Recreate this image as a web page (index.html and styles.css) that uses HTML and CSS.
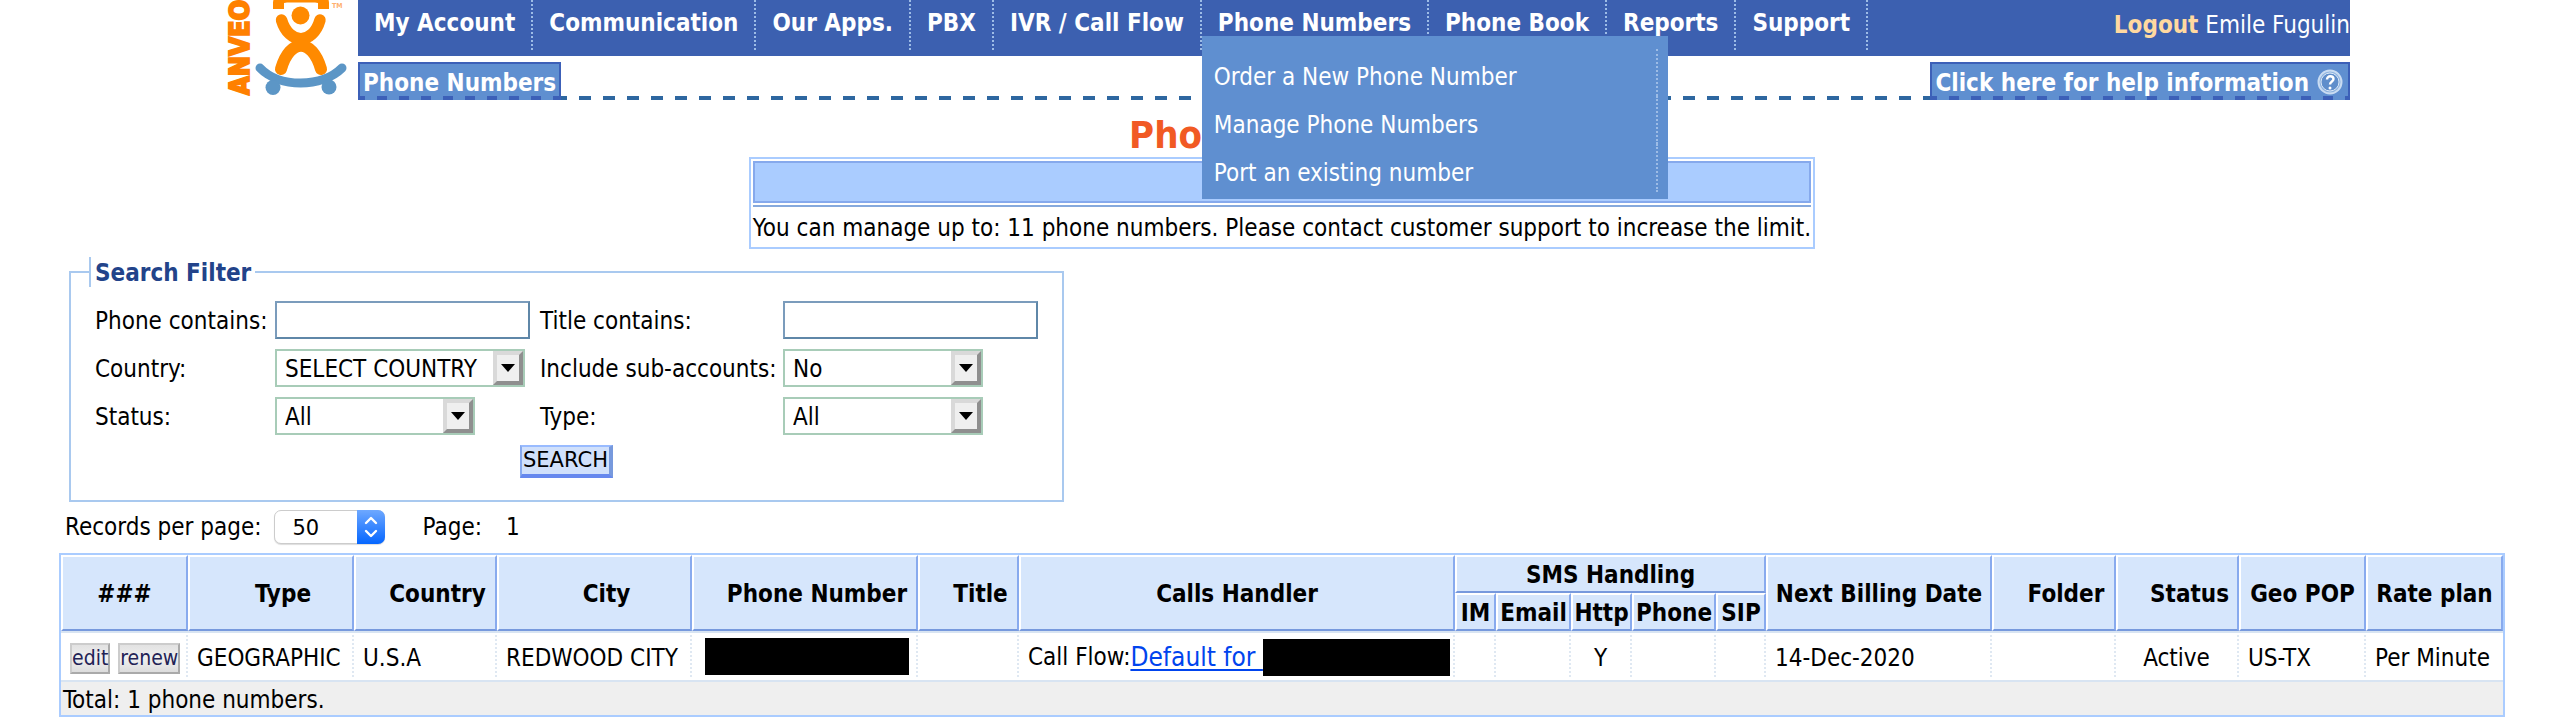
FILE: index.html
```html
<!DOCTYPE html>
<html lang="en">
<head>
<meta charset="utf-8">
<title>Phone Numbers</title>
<link rel="stylesheet" href="styles.css">
</head>
<body>
<header class="header">
  <a class="logo" href="#" aria-label="Anveo">
    <svg width="122" height="96" viewBox="0 0 122 96">
      <text class="logo-name" transform="translate(22 95) rotate(-90)">ANVEO</text>
      <g fill="none" stroke="#ff8a00" stroke-linecap="round">
        <path d="M51.500 9V3Q52 -3 60 -3H88Q96 -3 96.500 3V9" stroke-width="11" stroke-linecap="butt"/>
        <path d="M54.500 20C62 45 86 45 93 20" stroke-width="11.500"/>
        <path d="M54 69C63 38 85 38 94 69" stroke-width="12"/>
      </g>
      <circle cx="73.500" cy="15.500" r="9" fill="#ff8a00"/>
      <path d="M33 68C52 88 95 88 115 68" fill="none" stroke="#5c96c6" stroke-width="9" stroke-linecap="round"/>
      <circle cx="46" cy="87.500" r="7.500" fill="#5c96c6"/>
      <circle cx="102" cy="87" r="7.500" fill="#5c96c6"/>
      <text class="logo-tm" x="105" y="8">TM</text>
    </svg>
  </a>
  <div class="bars">
    <nav class="nav">
      <ul class="menu">
        <li><a href="#">My Account</a></li>
        <li><a href="#">Communication</a></li>
        <li><a href="#">Our Apps.</a></li>
        <li><a href="#">PBX</a></li>
        <li><a href="#">IVR / Call Flow</a></li>
        <li><a href="#">Phone Numbers</a>
          <ul class="submenu">
            <li><a href="#">Order a New Phone Number</a></li>
            <li><a href="#">Manage Phone Numbers</a></li>
            <li><a href="#">Port an existing number</a></li>
          </ul>
        </li>
        <li><a href="#">Phone Book</a></li>
        <li><a href="#">Reports</a></li>
        <li><a href="#">Support</a></li>
      </ul>
      <div class="user"><a href="#">Logout</a> Emile Fugulin</div>
    </nav>
    <div class="subbar">
      <a class="tab" href="#">Phone Numbers</a>
      <span class="dashes"></span>
      <a class="tab tab-help" href="#">Click here for help information
        <svg width="26" height="28" viewBox="0 0 26 28">
          <circle cx="13" cy="13" r="11.500" fill="#8fb3de" stroke="#c9dcf2" stroke-width="2"/>
          <circle cx="13" cy="13" r="9" fill="#5f8ecb" stroke="#dbe8f7" stroke-width="1"/>
          <path d="M10 10.500C10 6 16.500 6.500 16.500 10C16.500 12.500 13 12.500 13 15.500" fill="none" stroke="#fff" stroke-width="2.400"/>
          <circle cx="13" cy="19" r="1.500" fill="#fff"/>
        </svg>
      </a>
    </div>
  </div>
</header>

<main class="page">
  <h1>Phone Numbers</h1>
  <section class="notice">
    <div class="notice-head"></div>
    <p>You can manage up to: 11 phone numbers. Please contact customer support to increase the limit.</p>
  </section>

  <form class="search">
    <fieldset>
      <legend>Search Filter</legend>
      <div class="fields">
        <label for="phone">Phone contains:</label>
        <input class="text" id="phone" type="text">
        <label for="title">Title contains:</label>
        <input class="text" id="title" type="text">
        <label for="country">Country:</label>
        <div class="pick pick-wide">
          <select id="country"><option>SELECT COUNTRY</option></select>
          <span class="arrow"><svg width="14" height="8" viewBox="0 0 14 8"><path d="M0 0H14L7 8Z"/></svg></span>
        </div>
        <label for="sub">Include sub-accounts:</label>
        <div class="pick">
          <select id="sub"><option>No</option></select>
          <span class="arrow"><svg width="14" height="8" viewBox="0 0 14 8"><path d="M0 0H14L7 8Z"/></svg></span>
        </div>
        <label for="status">Status:</label>
        <div class="pick">
          <select id="status"><option>All</option></select>
          <span class="arrow"><svg width="14" height="8" viewBox="0 0 14 8"><path d="M0 0H14L7 8Z"/></svg></span>
        </div>
        <label for="type">Type:</label>
        <div class="pick">
          <select id="type"><option>All</option></select>
          <span class="arrow"><svg width="14" height="8" viewBox="0 0 14 8"><path d="M0 0H14L7 8Z"/></svg></span>
        </div>
      </div>
      <button class="search-button" type="button">SEARCH</button>
    </fieldset>
  </form>

  <div class="pager">
    <label for="records">Records per page:</label>
    <div class="stepper">
      <select id="records"><option>50</option></select>
      <span class="stepper-arrows"><svg width="14" height="22" viewBox="0 0 14 22" fill="none" stroke="#fff" stroke-width="2.400" stroke-linecap="round" stroke-linejoin="round"><path d="M2 7L7 2L12 7M2 15L7 20L12 15"/></svg></span>
    </div>
    <span class="pager-label">Page:</span>
    <span>1</span>
  </div>

  <table class="numbers">
    <colgroup>
      <col class="c-actions"><col class="c-type"><col class="c-country"><col class="c-city"><col class="c-phone"><col class="c-title"><col class="c-calls"><col class="c-im"><col class="c-email"><col class="c-http"><col class="c-smsphone"><col class="c-sip"><col class="c-billing"><col class="c-folder"><col class="c-status"><col class="c-pop"><col class="c-rate">
    </colgroup>
    <thead>
      <tr>
        <th rowspan="2">###</th>
        <th rowspan="2" class="sortable">Type</th>
        <th rowspan="2" class="sortable">Country</th>
        <th rowspan="2" class="sortable">City</th>
        <th rowspan="2" class="sortable">Phone Number</th>
        <th rowspan="2" class="sortable">Title</th>
        <th rowspan="2">Calls Handler</th>
        <th colspan="5">SMS Handling</th>
        <th rowspan="2">Next Billing Date</th>
        <th rowspan="2" class="sortable">Folder</th>
        <th rowspan="2" class="sortable">Status</th>
        <th rowspan="2">Geo POP</th>
        <th rowspan="2">Rate plan</th>
      </tr>
      <tr><th>IM</th><th>Email</th><th>Http</th><th>Phone</th><th>SIP</th></tr>
    </thead>
    <tbody>
      <tr>
        <td><div class="actions"><button type="button">edit</button><button type="button">renew</button></div></td>
        <td>GEOGRAPHIC</td>
        <td>U.S.A</td>
        <td>REDWOOD CITY</td>
        <td class="masked"><div class="mask"></div></td>
        <td></td>
        <td><div class="handler"><span>Call Flow:</span><a href="#">Default for&nbsp;</a><div class="mask"></div></div></td>
        <td></td><td></td><td class="center">Y</td><td></td><td></td>
        <td>14-Dec-2020</td>
        <td></td>
        <td class="center">Active</td>
        <td>US-TX</td>
        <td>Per Minute</td>
      </tr>
    </tbody>
    <tfoot><tr><td colspan="17">Total: 1 phone numbers.</td></tr></tfoot>
  </table>
</main>
</body>
</html>
```

FILE: styles.css
```css
* { box-sizing: border-box; }
body {
  margin: 0;
  background: #fff;
  color: #000;
  font: 24px/30px "DejaVu Sans Condensed", "DejaVu Sans", sans-serif;
}
ul { margin: 0; padding: 0; list-style: none; }
input, select, button { font: inherit; color: inherit; margin: 0; }

.header { display: flex; padding: 0 222px 0 227px; }
.logo { flex: none; width: 131px; }
.logo svg { display: block; }
.logo-name { font: bold 27px "DejaVu Sans Condensed", sans-serif; fill: #ff8000; stroke: #ff8000; stroke-width: 2px; }
.logo-tm { font-size: 7px; font-weight: bold; fill: #ffb070; }
.bars { flex: 1; }

.nav {
  display: flex;
  justify-content: space-between;
  height: 56px;
  background: #3c60b0;
  color: #fff;
  white-space: nowrap;
}
.menu { display: flex; height: 50px; }
.menu > li {
  position: relative;
  padding: 8px 16px 0;
  border-right: 2px dotted #9dbce6;
}
.menu a { color: #fff; text-decoration: none; font-weight: bold; }
.submenu {
  position: absolute;
  z-index: 2;
  top: 36px;
  left: 0;
  width: 466px;
  padding: 13px 10px 7px 0;
  background: #5f8fd0;
}
.submenu li { padding: 14px 12px 4px; border-right: 2px dotted #9dbce6; }
.submenu li:first-child { padding-top: 13px; }
.submenu a { font-weight: normal; }
.user { padding-top: 10px; }
.user a { color: #ffd9a0; font-weight: bold; text-decoration: none; }

.subbar { display: flex; align-items: flex-end; height: 38px; margin-top: 6px; }
.tab {
  display: flex;
  align-items: center;
  gap: 8px;
  height: 38px;
  padding: 1px 3px 0;
  border: 2px solid #3c60b8;
  border-bottom: 0;
  background: repeating-linear-gradient(90deg, #3c60b8 0 10px, transparent 10px 22px) -5px 100% / 110% 4px no-repeat #5f8fd0;
  color: #fff;
  font-weight: bold;
  text-decoration: none;
  white-space: nowrap;
}
.tab-help svg { margin-right: 2px; }
.dashes {
  flex: 1;
  height: 4px;
  background: repeating-linear-gradient(90deg, #2e67a0 0 12px, transparent 12px 24px) -6px 0 / 110% 4px no-repeat;
}

.page { padding: 17px 67px 0 59px; }
h1 {
  margin: 0;
  color: #f15a24;
  font-size: 38px;
  line-height: 37px;
  padding-bottom: 3px;
  text-align: center;
}
.notice {
  width: fit-content;
  margin: 0 auto;
  padding: 2px;
  border: 2px solid #aaccff;
}
.notice-head { height: 42px; background: #aaccff; border: 2px solid #86a9ec; }
.notice p {
  margin: 2px 0 0;
  padding: 6px 0 2px;
  border-top: 2px solid #86a9dd;
}

.search { width: 995px; margin: 8px 0 0 10px; }
fieldset {
  min-width: 0;
  margin: 0;
  padding: 14px 24px 22px;
  border: 2px solid #a9c9ef;
}
legend {
  margin-left: -6px;
  padding: 2px 4px 0;
  line-height: 28px;
  border-left: 2px solid #a9c9ef;
  color: #22438a;
  font-weight: bold;
}
.fields {
  display: grid;
  grid-template-columns: 180px 265px 243px auto;
  row-gap: 10px;
  align-items: center;
  white-space: nowrap;
}
.fields label { padding-top: 2px; }
.text {
  width: 255px;
  height: 38px;
  padding: 0 8px;
  border: 2px solid;
  border-color: #7b9cbc #5f87a8 #5f87a8 #7b9cbc;
  background: #fff;
}
.pick { position: relative; width: 200px; }
.pick-wide { width: 250px; }
.pick select {
  appearance: none;
  display: block;
  width: 100%;
  height: 38px;
  padding: 2px 8px 0;
  border: 2px solid #a8ccb8;
  border-radius: 0;
  background: #fff;
}
.arrow {
  position: absolute;
  top: 2px;
  right: 2px;
  bottom: 2px;
  display: flex;
  align-items: center;
  justify-content: center;
  width: 30px;
  border: 4px solid;
  border-color: #d9d9d9 #8f8f8f #8f8f8f #d9d9d9;
  background: #efefef;
  pointer-events: none;
}
.search-button {
  display: block;
  margin: 10px auto 0;
  padding: 0 1px;
  border: 2px solid;
  border-width: 2px 4px 4px 2px;
  border-color: #99bbff #7799dd #6688ee #88aaee;
  background: #d0e0fb;
  font: 21px/27px "DejaVu Sans", sans-serif;
}

.pager { display: flex; align-items: center; margin-top: 8px; padding-left: 6px; }
.stepper { position: relative; width: 111px; margin: 0 38px 0 12px; }
.stepper select {
  appearance: none;
  display: block;
  width: 100%;
  height: 34px;
  padding: 2px 18px 0;
  border: 1px solid #ccc;
  border-radius: 7px;
  background: #fff;
  box-shadow: 0 1px 1px #ddd;
  font: 21px/30px "DejaVu Sans", sans-serif;
}
.stepper-arrows {
  position: absolute;
  top: 0;
  right: 0;
  bottom: 0;
  display: flex;
  align-items: center;
  justify-content: center;
  width: 28px;
  border-radius: 0 7px 7px 0;
  background: linear-gradient(#6ea8ff, #0566ff);
  pointer-events: none;
}
.pager-label { margin-right: 24px; }

.numbers {
  table-layout: fixed;
  width: 100%;
  margin-top: 9px;
  border: 2px solid #aaccff;
  border-collapse: separate;
  border-spacing: 0;
  white-space: nowrap;
}
.c-actions, .c-pop { width: 127px; }
.c-type { width: 166px; }
.c-country { width: 143px; }
.c-city { width: 195px; }
.c-phone, .c-billing { width: 226px; }
.c-title { width: 101px; }
.c-calls { width: 436px; }
.c-im { width: 41px; }
.c-email { width: 75px; }
.c-http { width: 61px; }
.c-smsphone { width: 84px; }
.c-sip { width: 50px; }
.c-folder { width: 124px; }
.c-status { width: 123px; }
.c-rate { width: 137px; }
.numbers th {
  height: 38px;
  padding: 2px 0 0;
  border: 2px solid;
  border-color: #fff #88aaee #7799dd #fff;
  background: #d6e6fc;
}
.numbers th.sortable { padding-left: 24px; }
.numbers tbody td {
  height: 51px;
  padding: 3px 0 0 9px;
  border-top: 2px solid #d8e4f2;
  border-bottom: 2px solid #d8e4f2;
  background: repeating-linear-gradient(#dfe8f2 0 2px, transparent 2px 4px) 100% 2px / 2px 42px no-repeat;
}
.numbers tbody td:last-child { background: none; }
.numbers tbody td.center { padding: 3px 2px 0 0; text-align: center; }
.numbers tbody td.masked { padding: 0 9px 0 13px; }
.mask { height: 37px; background: #000; }
.actions { display: flex; gap: 8px; }
.actions button {
  height: 31px;
  padding: 0;
  border: 2px solid;
  border-color: #ccc #aaa #aaa #ccc;
  background: linear-gradient(#e2e2e2, #f0f0f0, #dcdcdc);
  color: #222255;
  font-size: 21px;
  line-height: 27px;
}
.handler { display: flex; align-items: center; padding-right: 5px; margin-top: -2px; }
.handler .mask { flex: 1; }
.handler a { color: #0044ee; font-size: 26px; text-underline-offset: 3px; }
.numbers tfoot td { height: 33px; padding: 2px 2px 0; background: #efefef; }
```
